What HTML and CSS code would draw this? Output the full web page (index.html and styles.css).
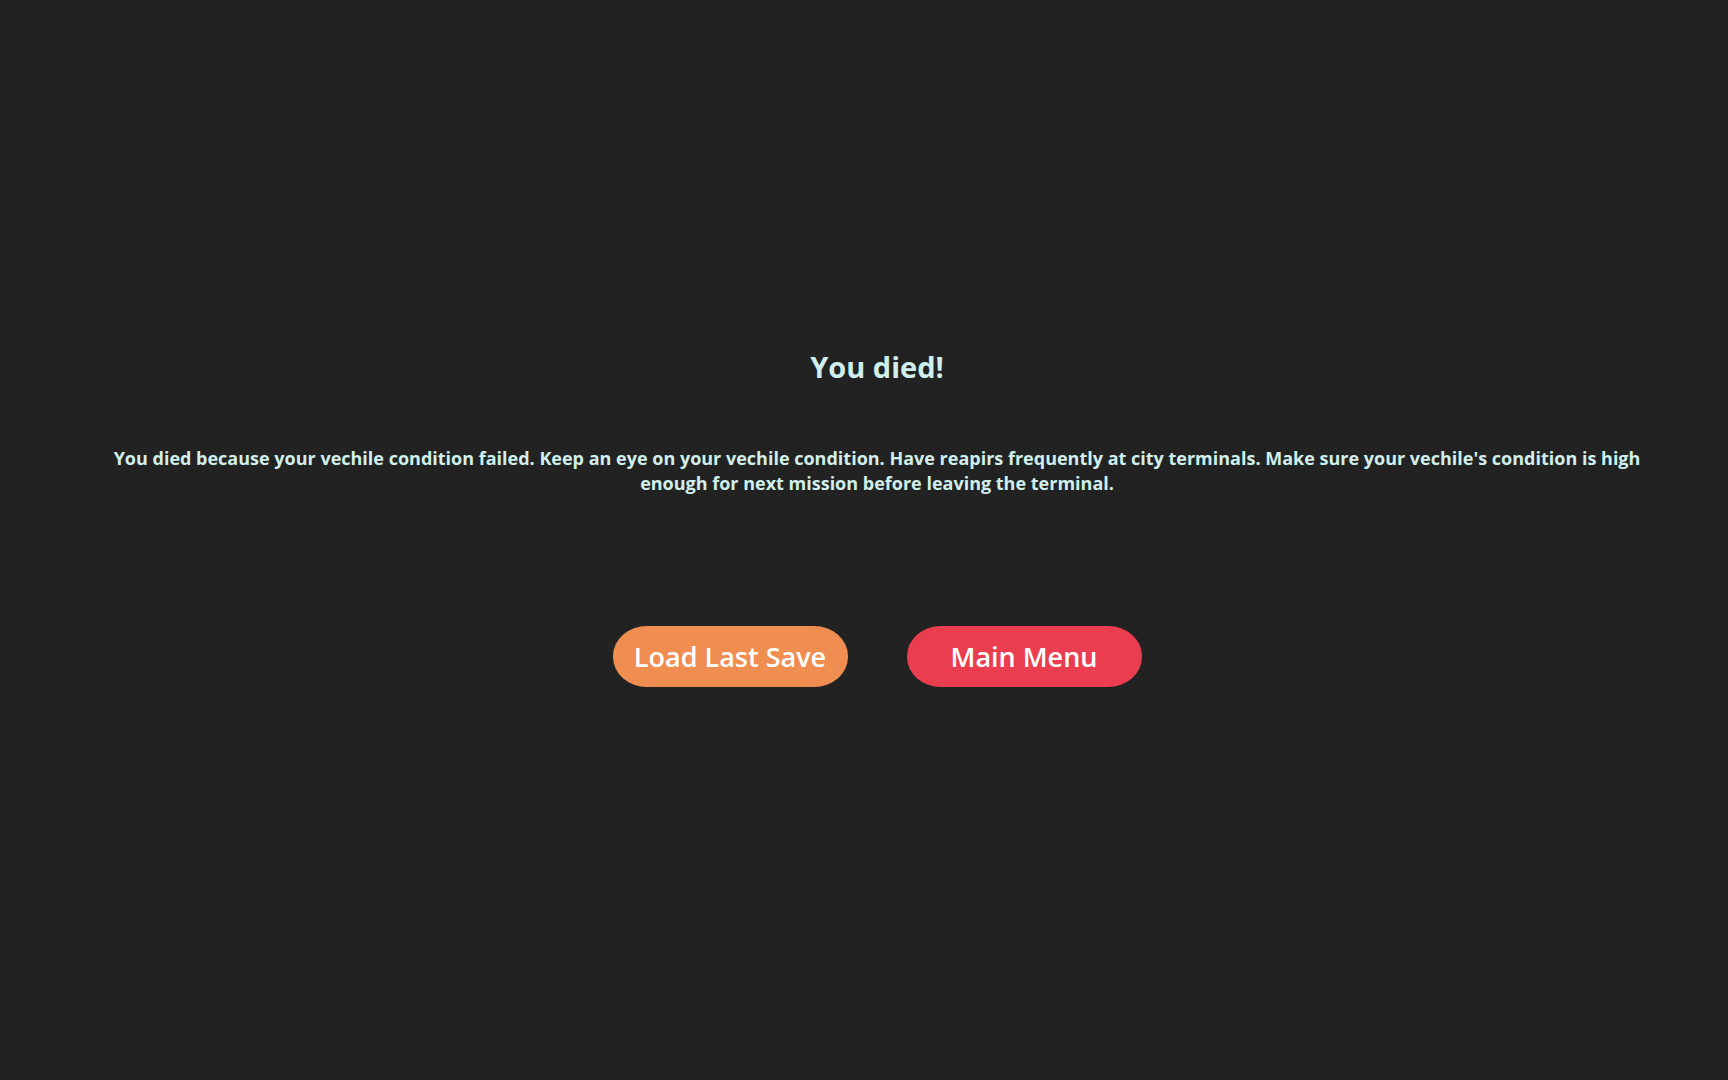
FILE: index.html
```html
<!DOCTYPE html>
<html lang="en">
<head>
    <meta charset="UTF-8">
    <meta name="viewport" content="width=device-width, initial-scale=1.0">
    <title>You died!</title>
    <link rel="stylesheet" href="styles.css">
</head>
<body>

    <main class="game-over">
        <h1>You died!</h1>
        <p class="reason">You died because your vechile condition failed. Keep an eye on your vechile condition. Have reapirs frequently at city terminals. Make sure your vechile's condition is high enough for next mission before leaving the terminal.</p>
        <div class="actions">
            <button type="button" class="btn load">Load Last Save</button>
            <button type="button" class="btn menu">Main Menu</button>
        </div>
    </main>

</body>
</html>
```
FILE: styles.css
```css
* {
    box-sizing: border-box;
}
body {
    margin: 0;
    background-color: #222222;
    color: #d0efec;
    font-family: 'Open Sans', sans-serif;
}
.game-over {
    display: flex;
    flex-direction: column;
    align-items: center;
    justify-content: center;
    min-height: 100vh;
    padding: 0 80px 46px 106px;
    text-align: center;
}
h1 {
    margin: 0 0 60px;
    font-size: 29px;
    font-weight: 700;
    line-height: 38px;
}
.reason {
    margin: 0 0 130px;
    font-size: 18px;
    font-weight: 700;
    line-height: 25px;
}
.actions {
    display: flex;
    gap: 59px;
}
.btn {
    width: 235px;
    height: 61px;
    padding: 0;
    border: none;
    border-radius: 34px / 30px;
    color: #fff;
    font-family: inherit;
    font-size: 27px;
    font-weight: 600;
    cursor: pointer;
}
.load {
    background-color: #ef8e50;
}
.menu {
    background-color: #ea3e50;
}
```
